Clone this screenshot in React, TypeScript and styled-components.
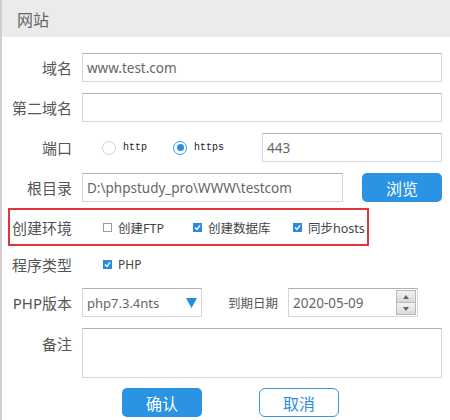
import React from "react";
import styled, { createGlobalStyle } from "styled-components";

const Global = createGlobalStyle`
  html, body { margin: 0; padding: 0; background: #fff; }
  body { font-family: "Noto Sans", "Noto Sans CJK SC", sans-serif; }
  * { box-sizing: border-box; }
`;

const Page = styled.div`
  width: 450px;
  height: 420px;
  border-left: 2px solid #cfcfcf;
  background: #fff;
  overflow: hidden;
  font-family: "Noto Sans", "Noto Sans CJK SC", sans-serif;
`;

const Header = styled.div`
  height: 37px;
  background: #ebebeb;
  padding-left: 15px;
  display: flex;
  align-items: center;
  font-size: 16px;
  color: #666;
`;

const Row = styled.div<{ $mt: number; $h: number; $top?: boolean }>`
  display: flex;
  align-items: ${(p) => (p.$top ? "flex-start" : "center")};
  margin-top: ${(p) => p.$mt}px;
  height: ${(p) => p.$h}px;
  padding-right: 8px;
  position: relative;
`;

const Highlight = styled.div`
  position: absolute;
  left: 6px;
  top: 0;
  width: 361px;
  height: 38px;
  border: 2px solid #e2353b;
  pointer-events: none;
`;

const Label = styled.div<{ $pt?: number }>`
  width: 70px;
  margin-right: 10px;
  text-align: right;
  font-size: 15px;
  color: #555;
  white-space: nowrap;
  padding-top: ${(p) => p.$pt ?? 0}px;
  flex-shrink: 0;
`;

const Field = styled.div<{ $w?: number }>`
  height: 29px;
  ${(p) => (p.$w ? `width: ${p.$w}px;` : "flex: 1;")}
  border: 1px solid #d6d6d6;
  border-top-color: #b0b0b0;
  background: #fff;
  display: flex;
  align-items: center;
  padding-left: 4px;
  font-size: 13.5px;
  color: #666;
  flex-shrink: 0;
  position: relative;
  white-space: nowrap;
`;

const TextArea = styled.div`
  flex: 1;
  height: 50px;
  border: 1px solid #d6d6d6;
  border-top-color: #b0b0b0;
  background: #fff;
`;

const RadioItem = styled.div<{ $ml: number }>`
  display: flex;
  align-items: center;
  margin-left: ${(p) => p.$ml}px;
`;

const RadioCircle = styled.span<{ $on?: boolean }>`
  width: 14px;
  height: 14px;
  border-radius: 50%;
  border: 1px solid ${(p) => (p.$on ? "#3a95e0" : "#cfcfcf")};
  background: #fff;
  display: flex;
  align-items: center;
  justify-content: center;
  margin-right: 7px;
  &::after {
    content: "";
    width: 7px;
    height: 7px;
    border-radius: 50%;
    background: ${(p) => (p.$on ? "#2b8de0" : "transparent")};
  }
`;

const MonoText = styled.span`
  font-family: "Liberation Mono", "DejaVu Sans Mono", monospace;
  font-size: 10px;
  color: #222;
`;

const BlueButton = styled.div<{ $w: number; $fs?: number }>`
  width: ${(p) => p.$w}px;
  height: 29px;
  border-radius: 5px;
  background: #2a93e3;
  color: #fff;
  font-size: ${(p) => p.$fs ?? 16}px;
  display: flex;
  align-items: center;
  justify-content: center;
  flex-shrink: 0;
`;

const GhostButton = styled.div<{ $w: number }>`
  width: ${(p) => p.$w}px;
  height: 29px;
  border-radius: 6px;
  border: 1px solid #3a92dd;
  background: #fff;
  color: #2f8ddd;
  font-size: 16px;
  display: flex;
  align-items: center;
  justify-content: center;
`;

const CheckItem = styled.div<{ $w?: number; $ml?: number }>`
  display: flex;
  align-items: center;
  margin-left: ${(p) => p.$ml ?? 0}px;
  ${(p) => (p.$w ? `width: ${p.$w}px;` : "")}
  font-size: 12.5px;
  color: #444;
  white-space: nowrap;
`;

const Box = styled.span<{ $on?: boolean }>`
  width: 9px;
  height: 9px;
  margin-right: 6px;
  border: 1px solid ${(p) => (p.$on ? "#2b8be0" : "#9a9a9a")};
  background: ${(p) => (p.$on ? "#2b8be0" : "#fff")};
  display: flex;
  align-items: center;
  justify-content: center;
`;

const SmallText = styled.span`
  font-size: 12px;
  color: #444;
`;

const Select = styled(Field)`
  font-size: 13px;
  padding-left: 4px;
  justify-content: space-between;
  padding-right: 4px;
`;

const Triangle = styled.svg`
  width: 11px;
  height: 10px;
`;

const MidLabel = styled.div`
  margin-left: 26px;
  margin-right: 10px;
  font-size: 12.5px;
  color: #555;
`;

const Spinner = styled.div`
  position: absolute;
  right: 1px;
  top: 1px;
  bottom: 1px;
  width: 20px;
  display: flex;
  flex-direction: column;
`;

const SpinHalf = styled.div`
  flex: 1;
  border: 1px solid #b8b8b8;
  background: linear-gradient(#f3f3f3, #d9d9d9);
  display: flex;
  align-items: center;
  justify-content: center;
  &:first-child { border-bottom: none; }
`;

const Buttons = styled.div`
  display: flex;
  gap: 57px;
  margin-top: 10px;
  padding-left: 120px;
`;

const Check = () => (
  <svg width="7" height="7" viewBox="0 0 7 7">
    <path d="M1 3.6 L2.9 5.4 L6.1 1.4" stroke="#fff" strokeWidth="1.4" fill="none" />
  </svg>
);

export default function App() {
  return (
    <Page>
      <Global />
      <Header>网站</Header>

      <Row $mt={16} $h={29}>
        <Label>域名</Label>
        <Field>www.test.com</Field>
      </Row>

      <Row $mt={11} $h={29}>
        <Label>第二域名</Label>
        <Field />
      </Row>

      <Row $mt={11} $h={29}>
        <Label>端口</Label>
        <RadioItem $ml={20}>
          <RadioCircle />
          <MonoText>http</MonoText>
        </RadioItem>
        <RadioItem $ml={26}>
          <RadioCircle $on />
          <MonoText>https</MonoText>
        </RadioItem>
        <Field $w={180} style={{ marginLeft: "auto" }}>443</Field>
      </Row>

      <Row $mt={11} $h={29}>
        <Label>根目录</Label>
        <Field $w={261}>D:\phpstudy_pro\WWW\testcom</Field>
        <BlueButton $w={80} style={{ marginLeft: "auto" }}>浏览</BlueButton>
      </Row>

      <Row $mt={6} $h={38}>
        <Highlight />
        <Label>创建环境</Label>
        <CheckItem $ml={21} $w={90}>
          <Box />
          创建FTP
        </CheckItem>
        <CheckItem $w={100}>
          <Box $on>
            <Check />
          </Box>
          创建数据库
        </CheckItem>
        <CheckItem>
          <Box $on>
            <Check />
          </Box>
          同步hosts
        </CheckItem>
      </Row>

      <Row $mt={8} $h={20}>
        <Label>程序类型</Label>
        <CheckItem $ml={21}>
          <Box $on>
            <Check />
          </Box>
          <SmallText>PHP</SmallText>
        </CheckItem>
      </Row>

      <Row $mt={14} $h={29}>
        <Label>PHP版本</Label>
        <Select $w={120}>
          php7.3.4nts
          <Triangle viewBox="0 0 11 10">
            <path d="M0 0 H11 L5.5 10 Z" fill="#1f8ee0" />
          </Triangle>
        </Select>
        <MidLabel>到期日期</MidLabel>
        <Field $w={130}>
          2020-05-09
          <Spinner>
            <SpinHalf>
              <svg width="6" height="4" viewBox="0 0 6 4">
                <path d="M0 4 L3 0 L6 4 Z" fill="#666" />
              </svg>
            </SpinHalf>
            <SpinHalf>
              <svg width="6" height="4" viewBox="0 0 6 4">
                <path d="M0 0 L3 4 L6 0 Z" fill="#666" />
              </svg>
            </SpinHalf>
          </Spinner>
        </Field>
      </Row>

      <Row $mt={11} $h={50} $top>
        <Label $pt={5}>备注</Label>
        <TextArea />
      </Row>

      <Buttons>
        <BlueButton $w={80}>确认</BlueButton>
        <GhostButton $w={80}>取消</GhostButton>
      </Buttons>
    </Page>
  );
}
